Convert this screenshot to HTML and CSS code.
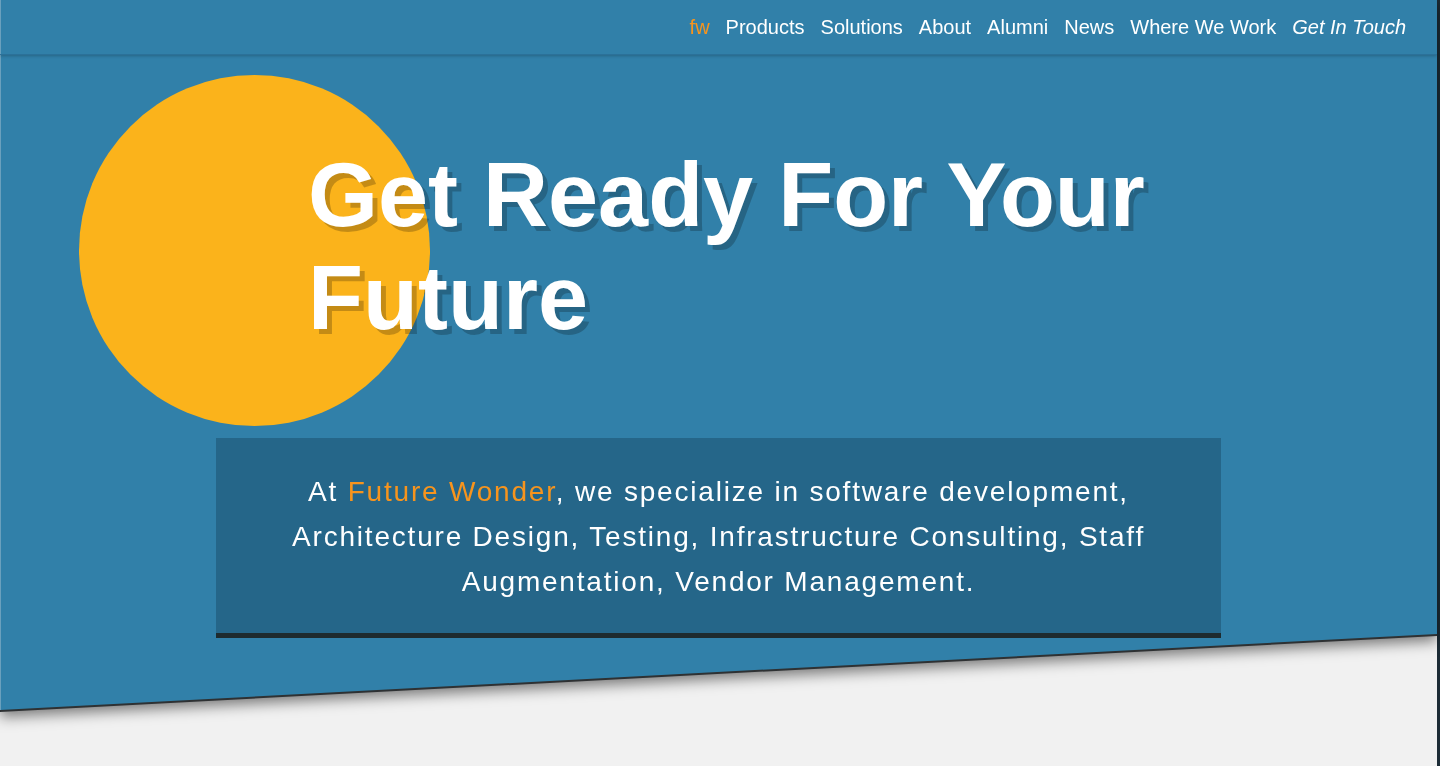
FILE: index.html
```html
<!DOCTYPE html>
<html lang="en">
<head>
<meta charset="utf-8">
<title>Future Wonder</title>
<link rel="stylesheet" href="styles.css">
</head>
<body>
<div class="page">
  <div class="hero-wrap">
    <section class="hero">
      <nav class="nav">
        <a class="nav-link brand" href="#">fw</a>
        <a class="nav-link" href="#">Products</a>
        <a class="nav-link" href="#">Solutions</a>
        <a class="nav-link" href="#">About</a>
        <a class="nav-link" href="#">Alumni</a>
        <a class="nav-link" href="#">News</a>
        <a class="nav-link" href="#">Where We Work</a>
        <a class="nav-link cta" href="#">Get In Touch</a>
      </nav>
      <div class="hero-body">
        <div class="sun"></div>
        <h1 class="headline">Get Ready For Your<br>Future</h1>
        <div class="intro">
          <p>At <span class="accent">Future Wonder</span>, we specialize in software development, Architecture Design, Testing, Infrastructure Consulting, Staff Augmentation, Vendor Management.</p>
        </div>
      </div>
    </section>
  </div>
</div>
</body>
</html>
```

FILE: styles.css
```css
* { box-sizing: border-box; }
html, body { margin: 0; padding: 0; }
body {
  background: #f1f1f1;
  font-family: "Liberation Sans", Arial, sans-serif;
  height: 766px;
  overflow: hidden;
}
.page {
  height: 766px;
  border-right: 3px solid #1c2c36;
}
.hero-wrap {
  filter: drop-shadow(0 2px 0 #2e3133) drop-shadow(0 5px 7px rgba(0,0,0,0.5));
}
.hero {
  background: #3180a9;
  height: 712px;
  clip-path: polygon(0 0, 100% 0, 100% 634px, 0 710px);
  box-shadow: inset 1px 0 0 #6aa0bd;
}
.nav {
  height: 55px;
  display: flex;
  justify-content: flex-end;
  align-items: center;
  gap: 16px;
  padding-right: 31px;
  padding-top: 1px;
  box-shadow: 0 1px 3px rgba(0,0,0,0.22);
  border-bottom: 1px solid #2b7199;
}
.nav-link {
  color: #fff;
  text-decoration: none;
  font-size: 20px;
}
.brand { color: #f7941d; }
.cta { font-style: italic; }
.hero-body {
  position: relative;
  padding-top: 89px;
}
.sun {
  position: absolute;
  left: 79px;
  top: 20px;
  width: 351px;
  height: 351px;
  border-radius: 50%;
  background: #fbb31b;
}
.headline {
  position: relative;
  margin: 0 0 88px 308px;
  font-size: 90px;
  line-height: 103px;
  font-weight: bold;
  color: #fff;
  text-shadow: 5px 5px 0 rgba(0,0,0,0.22);
}
.intro {
  width: 1005px;
  margin: 0 auto;
  background: #256689;
  border-bottom: 5px solid #1e2b2f;
  padding: 31px 50px 29px;
  text-align: center;
}
.intro p {
  margin: 0;
  color: #fff;
  font-size: 28px;
  line-height: 45px;
  letter-spacing: 1.8px;
}
.accent { color: #f7941d; }
```
